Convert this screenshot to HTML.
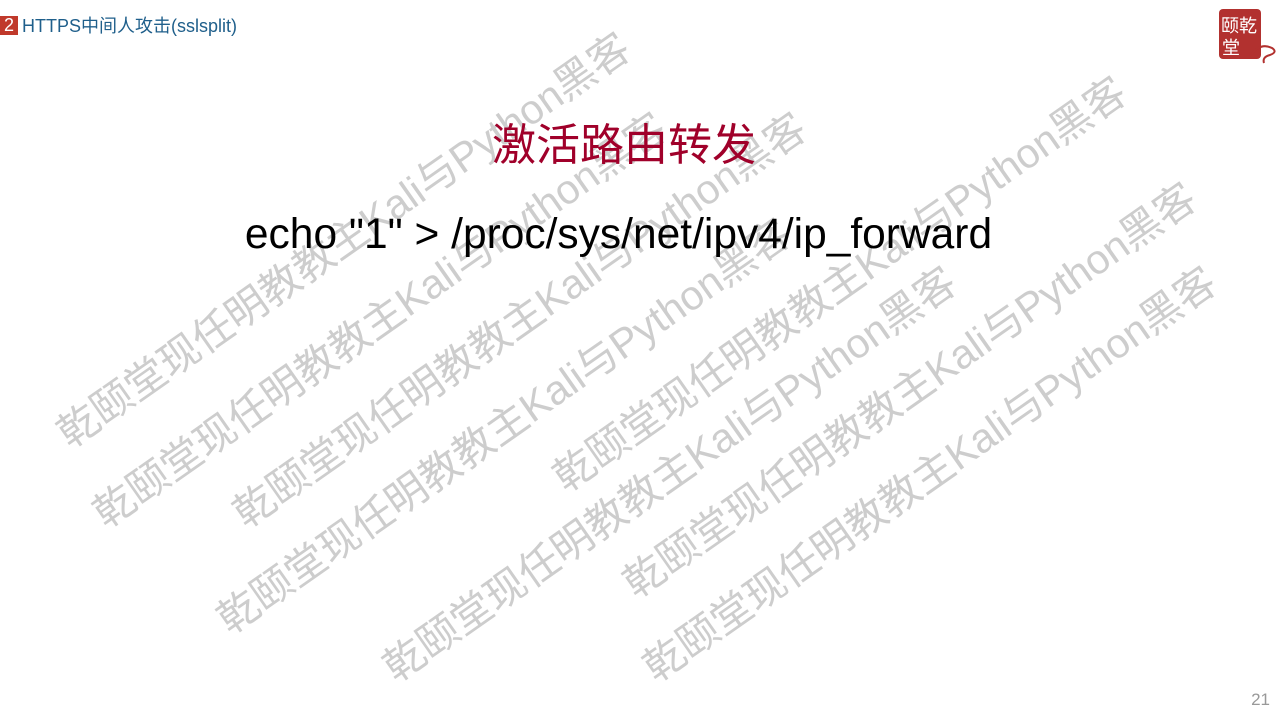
<!DOCTYPE html>
<html><head><meta charset="utf-8"><style>
body{margin:0;width:1280px;height:720px;overflow:hidden;background:#fff;position:relative;font-family:"Liberation Sans","Noto Sans CJK SC",sans-serif}
.wm{position:absolute;white-space:nowrap;font-size:41px;line-height:41px;color:#cdcdcd;transform-origin:0 100%;transform:rotate(-35deg)}
.hd{position:absolute;left:0;top:12px;font-size:18px;color:#1f5f8b;display:flex;align-items:center}
.hd b{background:#c0392b;color:#fff;font-weight:normal;padding:0 4px;margin-right:4px;line-height:19px;display:inline-block}
</style></head><body>
<div class="hd"><b>2</b>HTTPS中间人攻击(sslsplit)</div>
<svg style="position:absolute;left:1216px;top:6px" width="62" height="60" viewBox="0 0 62 60">
<rect x="3" y="3" width="42" height="50" rx="4" fill="#b2312f"/>
<text x="5" y="26" font-size="18" fill="#fff" font-family="Noto Sans CJK SC">颐乾</text>
<text x="6" y="48" font-size="18" fill="#fff" font-family="Noto Sans CJK SC">堂</text>
<path d="M34 50 q10 -14 22 -8 q6 4 -2 7 q-8 2 -6 8" fill="none" stroke="#b2312f" stroke-width="2"/>
</svg>
<div class="wm" style="left:74px;top:414px">乾颐堂现任明教教主Kali与Python黑客</div>
<div class="wm" style="left:110px;top:494px">乾颐堂现任明教教主Kali与Python黑客</div>
<div class="wm" style="left:250px;top:494px">乾颐堂现任明教教主Kali与Python黑客</div>
<div class="wm" style="left:234px;top:600px">乾颐堂现任明教教主Kali与Python黑客</div>
<div class="wm" style="left:570px;top:458px">乾颐堂现任明教教主Kali与Python黑客</div>
<div class="wm" style="left:400px;top:648px">乾颐堂现任明教教主Kali与Python黑客</div>
<div class="wm" style="left:640px;top:564px">乾颐堂现任明教教主Kali与Python黑客</div>
<div class="wm" style="left:660px;top:648px">乾颐堂现任明教教主Kali与Python黑客</div>
<div style="position:absolute;left:0;width:1248px;top:118px;text-align:center;font-size:44px;line-height:56px;color:#a0002a">激活路由转发</div>
<div style="position:absolute;left:0;width:1237px;top:211px;text-align:center;font-size:42.5px;line-height:48px;color:#000">echo "1" &gt; /proc/sys/net/ipv4/ip_forward</div>
<div style="position:absolute;right:10px;top:690px;font-size:17px;color:#999">21</div>
</body></html>
